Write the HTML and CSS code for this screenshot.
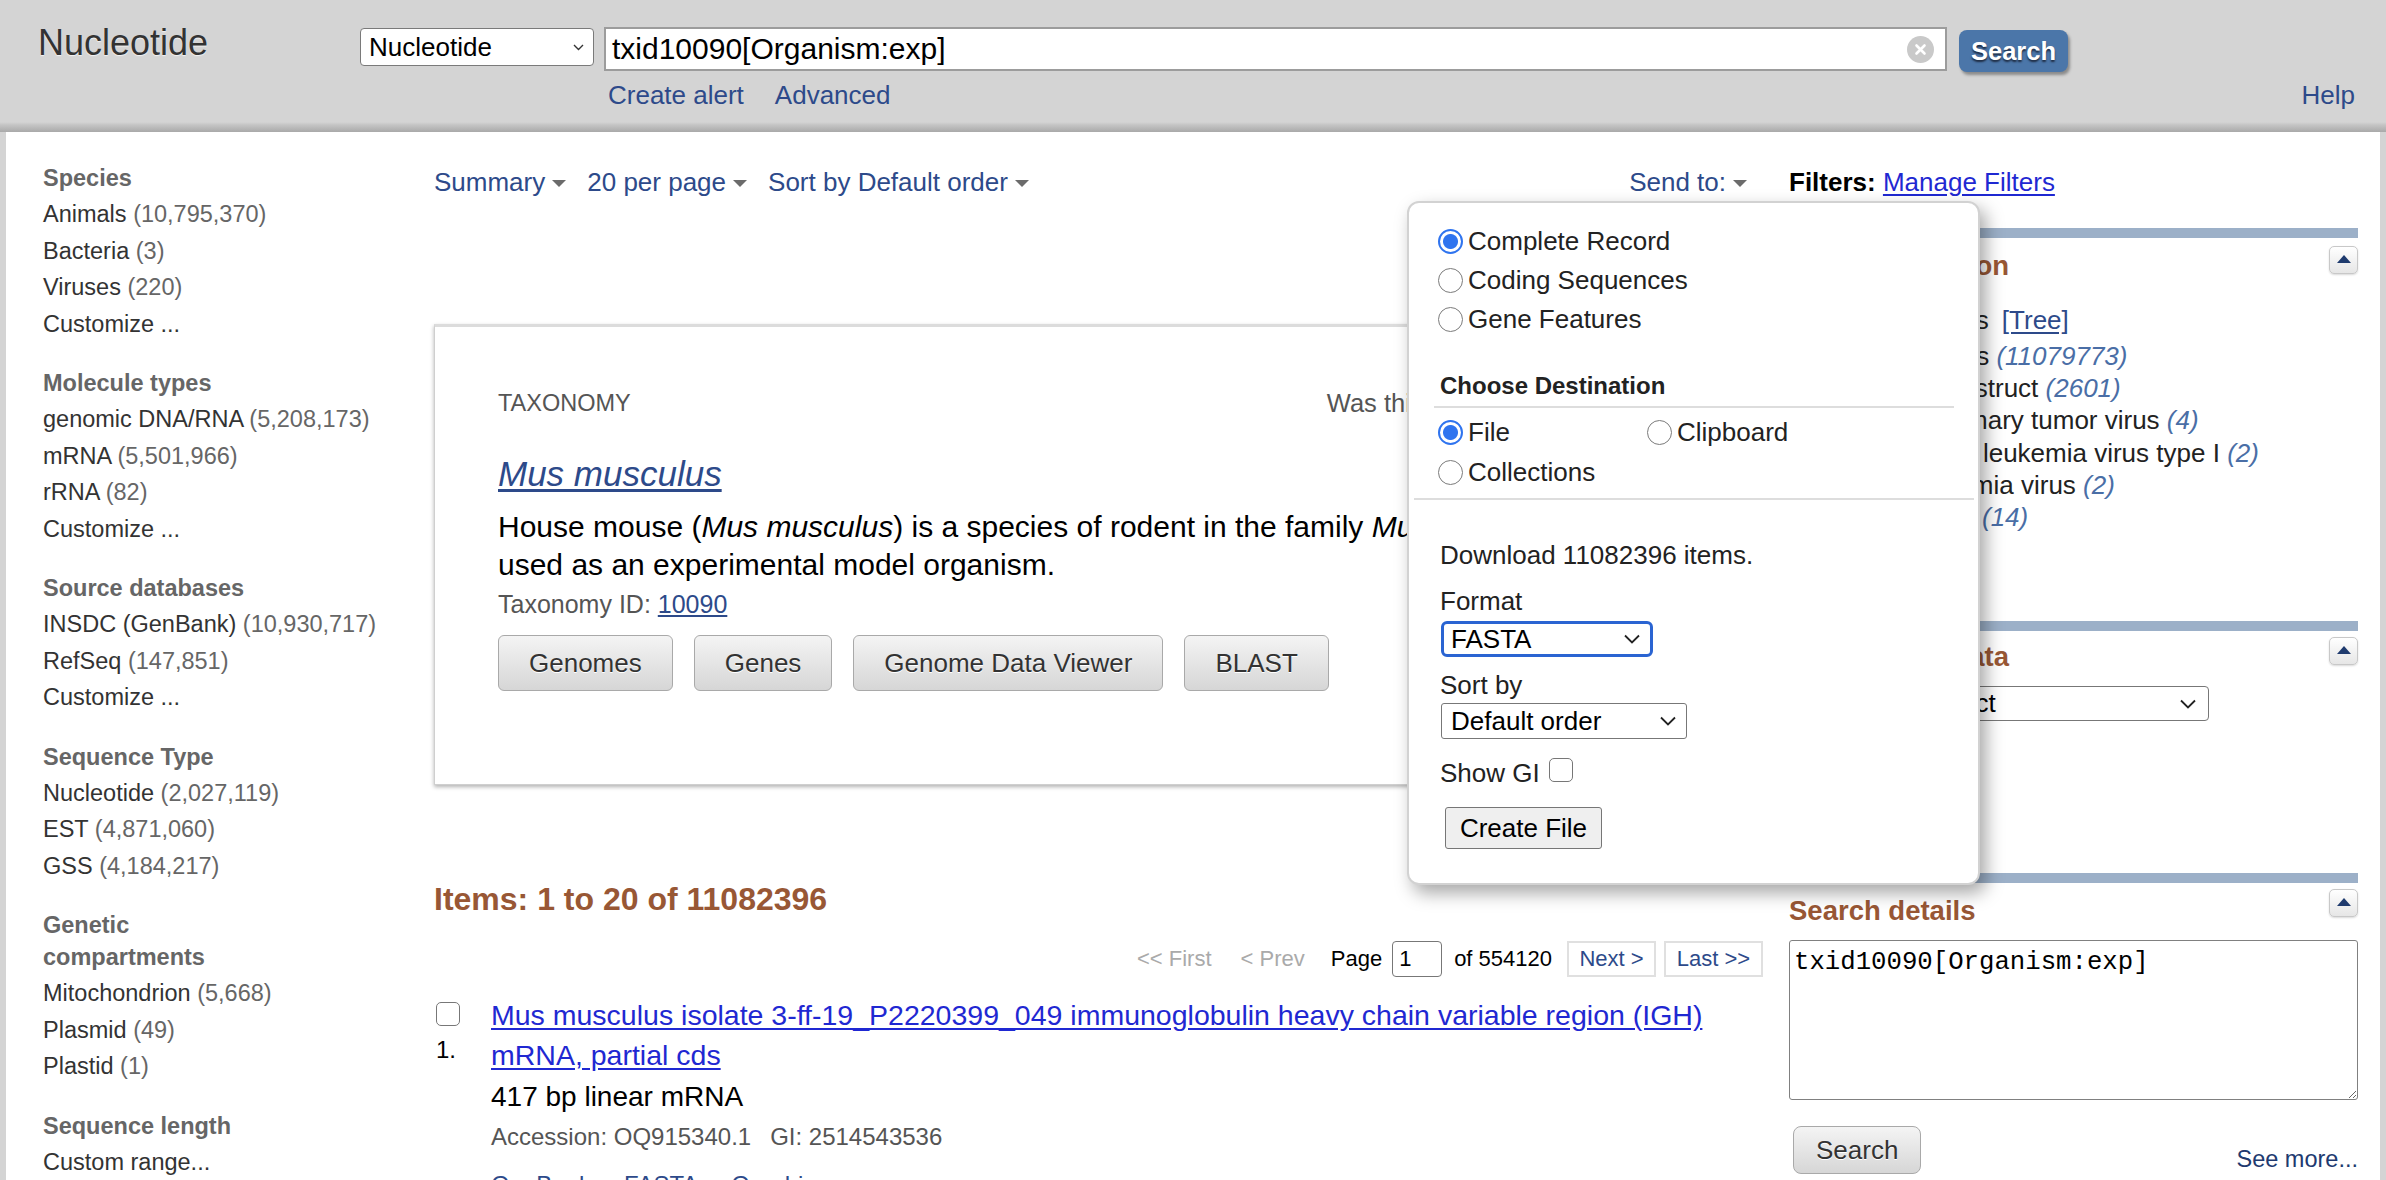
FILE: index.html
```html
<!DOCTYPE html>
<html lang="en">
<head>
<meta charset="utf-8">
<title>Nucleotide</title>
<link rel="stylesheet" href="styles.css">
</head>
<body>
<header class="header">
  <div class="brand">Nucleotide</div>
  <div class="search">
    <div class="search-row">
      <div class="db-select"><span>Nucleotide</span><svg width="11" height="7" viewBox="0 0 11 7"><path d="M1 1l4.5 4.5L10 1" fill="none" stroke="#333" stroke-width="1.4"/></svg></div>
      <div class="term"><span class="term-text">txid10090[Organism:exp]</span><svg width="27" height="27" viewBox="0 0 27 27"><circle cx="13.5" cy="13.5" r="13.5" fill="#c9c9c9"/><path d="M9.5 9.5l8 8M17.5 9.5l-8 8" stroke="#fff" stroke-width="2.6" stroke-linecap="round"/></svg></div>
      <button class="search-btn">Search</button>
    </div>
    <div class="search-links"><a href="#">Create alert</a><a href="#">Advanced</a></div>
  </div>
  <a class="help" href="#">Help</a>
</header>

<div class="page">
  <aside class="facets">
    <div class="facet-group">
      <h3>Species</h3>
      <ul>
        <li>Animals <span class="cnt">(10,795,370)</span></li>
        <li>Bacteria <span class="cnt">(3)</span></li>
        <li>Viruses <span class="cnt">(220)</span></li>
        <li>Customize ...</li>
      </ul>
    </div>
    <div class="facet-group">
      <h3>Molecule types</h3>
      <ul>
        <li>genomic DNA/RNA <span class="cnt">(5,208,173)</span></li>
        <li>mRNA <span class="cnt">(5,501,966)</span></li>
        <li>rRNA <span class="cnt">(82)</span></li>
        <li>Customize ...</li>
      </ul>
    </div>
    <div class="facet-group">
      <h3>Source databases</h3>
      <ul>
        <li>INSDC (GenBank) <span class="cnt">(10,930,717)</span></li>
        <li>RefSeq <span class="cnt">(147,851)</span></li>
        <li>Customize ...</li>
      </ul>
    </div>
    <div class="facet-group">
      <h3>Sequence Type</h3>
      <ul>
        <li>Nucleotide <span class="cnt">(2,027,119)</span></li>
        <li>EST <span class="cnt">(4,871,060)</span></li>
        <li>GSS <span class="cnt">(4,184,217)</span></li>
      </ul>
    </div>
    <div class="facet-group">
      <h3>Genetic compartments</h3>
      <ul>
        <li>Mitochondrion <span class="cnt">(5,668)</span></li>
        <li>Plasmid <span class="cnt">(49)</span></li>
        <li>Plastid <span class="cnt">(1)</span></li>
      </ul>
    </div>
    <div class="facet-group">
      <h3>Sequence length</h3>
      <ul>
        <li>Custom range...</li>
      </ul>
    </div>
  </aside>

  <main class="results">
    <div class="toolbar">
      <a href="#" class="tb-item">Summary<svg class="tri" width="14" height="7" viewBox="0 0 14 7"><path d="M0 0h14L7 7z" fill="#6b6b6b"/></svg></a>
      <a href="#" class="tb-item">20 per page<svg class="tri" width="14" height="7" viewBox="0 0 14 7"><path d="M0 0h14L7 7z" fill="#6b6b6b"/></svg></a>
      <a href="#" class="tb-item">Sort by Default order<svg class="tri" width="14" height="7" viewBox="0 0 14 7"><path d="M0 0h14L7 7z" fill="#6b6b6b"/></svg></a>
      <a href="#" class="tb-item sendto-link">Send to:<svg class="tri" width="14" height="7" viewBox="0 0 14 7"><path d="M0 0h14L7 7z" fill="#6b6b6b"/></svg></a>
    </div>

    <section class="card">
      <div class="card-head">
        <span class="kicker">TAXONOMY</span>
        <span class="helpful">Was this helpful?
          <svg width="36" height="36" viewBox="0 0 24 24"><path d="M2 10h4v11H2zM8 21V10l5-8c1.5 0 2.5 1 2 3l-1 4h6c1.2 0 2 1 1.8 2.2l-1.6 8C20 20.4 19.2 21 18.3 21z" fill="none" stroke="#555" stroke-width="1.4"/></svg>
          <svg width="36" height="36" viewBox="0 0 24 24"><path d="M2 3h4v11H2zM8 3v11l5 8c1.5 0 2.5-1 2-3l-1-4h6c1.2 0 2-1 1.8-2.2l-1.6-8C20 3.6 19.2 3 18.3 3z" fill="none" stroke="#555" stroke-width="1.4"/></svg>
        </span>
      </div>
      <a href="#" class="card-title">Mus musculus</a>
      <p class="card-desc">House mouse (<i>Mus musculus</i>) is a species of rodent in the family <i>Muridae</i>. It is widely used as an experimental model organism.</p>
      <div class="card-id">Taxonomy ID: <a href="#">10090</a></div>
      <div class="card-btns">
        <button class="gbtn">Genomes</button>
        <button class="gbtn">Genes</button>
        <button class="gbtn">Genome Data Viewer</button>
        <button class="gbtn">BLAST</button>
      </div>
    </section>

    <h2 class="items-title">Items: 1 to 20 of 11082396</h2>

    <div class="pager">
      <span class="pg-off pg-first">&lt;&lt; First</span>
      <span class="pg-off pg-prev">&lt; Prev</span>
      <span class="pg-page">Page</span>
      <span class="pg-input">1</span>
      <span class="pg-of">of 554120</span>
      <a href="#" class="pg-box pg-next">Next &gt;</a>
      <a href="#" class="pg-box pg-last">Last &gt;&gt;</a>
    </div>

    <div class="rslt">
      <div class="rslt-num"><span class="cb"></span><span class="num">1.</span></div>
      <div class="rslt-body">
        <a href="#" class="rslt-title">Mus musculus isolate 3-ff-19_P2220399_049 immunoglobulin heavy chain variable region (IGH) mRNA, partial cds</a>
        <div class="rslt-desc">417 bp linear mRNA</div>
        <div class="rslt-meta">Accession: OQ915340.1<span class="gi">GI: 2514543536</span></div>
        <div class="rslt-links"><a href="#">GenBank</a><a href="#">FASTA</a><a href="#">Graphics</a></div>
      </div>
    </div>
  </main>

  <aside class="side">
    <div class="filters"><b>Filters:</b> <a href="#">Manage Filters</a></div>

    <section class="panel panel-taxon">
      <div class="panel-bar"></div>
      <div class="panel-head">
        <h4>Results by taxon</h4>
        <button class="collapse"><svg width="14" height="8" viewBox="0 0 14 8"><path d="M7 0L14 8H0z" fill="#1f3b6e"/></svg></button>
      </div>
      <div class="top-org">Top Organisms<a href="#" class="tree">[Tree]</a></div>
      <ul class="taxa">
        <li>Mus musculus <span class="n">(11079773)</span></li>
        <li>synthetic construct <span class="n">(2601)</span></li>
        <li>Mouse mammary tumor virus <span class="n">(4)</span></li>
        <li>Human T-cell leukemia virus type I <span class="n">(2)</span></li>
        <li>Murine leukemia virus <span class="n">(2)</span></li>
        <li>All other taxa <span class="n">(14)</span></li>
      </ul>
    </section>

    <section class="panel panel-related">
      <div class="panel-bar"></div>
      <div class="panel-head">
        <h4>Find related data</h4>
        <button class="collapse"><svg width="14" height="8" viewBox="0 0 14 8"><path d="M7 0L14 8H0z" fill="#1f3b6e"/></svg></button>
      </div>
      <div class="db-row">Database: <span class="fsel fsel-db">Select<svg width="16" height="10" viewBox="0 0 16 10"><path d="M1 1.5l7 7 7-7" fill="none" stroke="#222" stroke-width="1.8"/></svg></span></div>
      <button class="sbtn find-btn">Find items</button>
    </section>

    <section class="panel panel-details">
      <div class="panel-bar"></div>
      <div class="panel-head">
        <h4>Search details</h4>
        <button class="collapse"><svg width="14" height="8" viewBox="0 0 14 8"><path d="M7 0L14 8H0z" fill="#1f3b6e"/></svg></button>
      </div>
      <textarea class="details" spellcheck="false">txid10090[Organism:exp]</textarea>
      <div class="details-foot">
        <button class="sbtn">Search</button>
        <a href="#" class="see-more">See more...</a>
      </div>
    </section>
  </aside>
</div>

<div class="sendto" role="dialog">
  <div class="st-formats">
    <label class="st-row"><input type="radio" name="fmt" checked>Complete Record</label>
    <label class="st-row"><input type="radio" name="fmt">Coding Sequences</label>
    <label class="st-row"><input type="radio" name="fmt">Gene Features</label>
  </div>
  <div class="st-dest">
    <div class="st-dest-title">Choose Destination</div>
    <div class="st-grid">
      <label class="st-row"><input type="radio" name="dest" checked>File</label>
      <label class="st-row"><input type="radio" name="dest">Clipboard</label>
      <label class="st-row"><input type="radio" name="dest">Collections</label>
    </div>
  </div>
  <div class="st-sep"></div>
  <div class="st-download">
    <div class="st-line">Download 11082396 items.</div>
    <div class="st-line st-format">Format</div>
    <div class="fsel fsel-fasta">FASTA<svg width="16" height="10" viewBox="0 0 16 10"><path d="M1 1.5l7 7 7-7" fill="none" stroke="#222" stroke-width="1.8"/></svg></div>
    <div class="st-line st-sort">Sort by</div>
    <div class="fsel fsel-order">Default order<svg width="16" height="10" viewBox="0 0 16 10"><path d="M1 1.5l7 7 7-7" fill="none" stroke="#222" stroke-width="1.8"/></svg></div>
    <div class="st-line st-gi">Show GI<span class="cb cb-gi"></span></div>
    <button class="create-btn">Create File</button>
  </div>
</div>
</body>
</html>
```

FILE: styles.css
```css
* { box-sizing: border-box; }
html, body { margin: 0; padding: 0; }
body {
  width: 2386px;
  height: 1180px;
  overflow: hidden;
  position: relative;
  background: #d4d4d4;
  font-family: "Liberation Sans", Arial, sans-serif;
  color: #222;
}
a { color: #2d4a8a; text-decoration: none; }
ul { list-style: none; margin: 0; padding: 0; }
button { font-family: "Liberation Sans", Arial, sans-serif; cursor: pointer; }

/* ---------- header ---------- */
.header {
  height: 132px;
  display: flex;
  align-items: flex-start;
  padding: 0 31px 0 38px;
  background: linear-gradient(#d4d4d4 0, #d4d4d4 122px, #c4c4c4 125px, #a9a9a9 132px);
}
.brand {
  width: 322px;
  margin-top: 23px;
  font-size: 36px;
  line-height: 40px;
  color: #333;
  text-shadow: 0 1px 1px #f4f4f4;
}
.search { margin-top: 27px; }
.search-row { display: flex; align-items: flex-start; }
.db-select {
  margin-top: 1px;
  width: 234px;
  height: 38px;
  display: flex;
  align-items: center;
  justify-content: space-between;
  padding: 0 9px 0 8px;
  background: #fff;
  border: 1px solid #7a7a7a;
  border-radius: 4px;
  font-size: 26px;
  color: #000;
}
.term {
  margin-left: 10px;
  width: 1343px;
  height: 44px;
  display: flex;
  align-items: center;
  justify-content: space-between;
  padding: 0 11px 0 6px;
  background: #fff;
  border: 2px solid #9c9c9c;
}
.term-text { font-size: 30px; color: #000; }
.search-btn {
  margin-left: 12px;
  margin-top: 3px;
  width: 109px;
  height: 42px;
  padding: 0;
  border: 0;
  border-radius: 8px;
  background: #4b76a9;
  color: #fff;
  font-weight: bold;
  font-size: 25.5px;
  text-shadow: 0 2px 2px #1d2a40;
  box-shadow: 2px 3px 3px rgba(0, 0, 0, .35);
}
.search-links {
  display: flex;
  gap: 31px;
  padding-left: 248px;
  margin-top: 8px;
  font-size: 26px;
  line-height: 30px;
}
.help {
  margin-left: auto;
  margin-top: 80px;
  font-size: 26px;
  line-height: 30px;
}

/* ---------- page frame ---------- */
.page {
  display: flex;
  margin: 0 6px;
  background: #fff;
  height: 1048px;
}

/* ---------- left facets ---------- */
.facets {
  flex: none;
  width: 428px;
  padding: 30px 0 0 37px;
}
.facet-group { margin-bottom: 25px; }
.facet-group h3 {
  width: 240px;
  margin: 0 0 2px;
  font-size: 23.5px;
  line-height: 32px;
  font-weight: bold;
  color: #666;
}
.facet-group li {
  font-size: 23.5px;
  line-height: 36.5px;
  color: #333;
  white-space: nowrap;
}
.cnt { color: #666; }

/* ---------- main results ---------- */
.results { flex: none; width: 1329px; }
.toolbar {
  display: flex;
  align-items: center;
  gap: 21px;
  height: 36px;
  margin-top: 32px;
  padding-right: 16px;
}
.tb-item {
  display: flex;
  align-items: center;
  font-size: 26px;
  line-height: 36px;
}
.tri { margin-left: 7px; margin-top: 3px; }
.sendto-link { margin-left: auto; }

.card {
  margin-top: 124px;
  border: 1px solid #cfcfcf;
  border-top: 3px solid #dcdcdc;
  box-shadow: 0 2px 4px rgba(0, 0, 0, .3);
  padding: 58px 63px 93px;
  background: #fff;
}
.card-head {
  display: flex;
  align-items: center;
  justify-content: space-between;
  height: 36px;
}
.kicker { font-size: 23.5px; color: #555; }
.helpful {
  display: flex;
  align-items: center;
  gap: 16px;
  margin-right: 75px;
  font-size: 25.5px;
  color: #555;
}
.card-title {
  display: inline-block;
  margin-top: 31px;
  font-size: 35px;
  line-height: 44px;
  font-style: italic;
  text-decoration: underline;
  text-underline-offset: 3px;
}
.card-desc {
  margin: 12px 0 0;
  font-size: 30px;
  line-height: 38px;
  color: #000;
}
.card-id {
  margin-top: 4px;
  font-size: 25px;
  line-height: 32px;
  color: #555;
}
.card-id a { text-decoration: underline; }
.card-btns {
  display: flex;
  gap: 21px;
  margin-top: 15px;
}
.gbtn {
  height: 56px;
  padding: 0 30px;
  border: 1px solid #a9a9a9;
  border-radius: 6px;
  background: linear-gradient(#f4f4f4, #d6d6d6);
  font-size: 26px;
  color: #333;
  text-shadow: 0 1px 0 #fff;
}

.items-title {
  margin: 94px 0 0;
  font-size: 32px;
  line-height: 40px;
  font-weight: bold;
  color: #985735;
}

.pager {
  display: flex;
  align-items: center;
  justify-content: flex-end;
  height: 36px;
  margin-top: 22px;
  font-size: 22px;
  color: #000;
  white-space: nowrap;
}
.pg-off { color: #aaa; }
.pg-first { margin-right: 29px; }
.pg-prev { margin-right: 26px; }
.pg-page { margin-right: 10px; }
.pg-input {
  width: 50px;
  height: 36px;
  padding-left: 6px;
  line-height: 33px;
  border: 1.5px solid #777;
  border-radius: 4px;
  margin-right: 12px;
}
.pg-of { margin-right: 15px; }
.pg-box {
  display: flex;
  align-items: center;
  justify-content: center;
  flex: none;
  height: 36px;
  padding: 0;
  border: 2px solid #e0e0e0;
  white-space: nowrap;
}
.pg-next { margin-right: 8px; width: 89px; }
.pg-last { width: 99px; }

.rslt {
  display: flex;
  margin-top: 18px;
  padding-left: 2px;
}
.rslt-num {
  flex: none;
  width: 55px;
  display: flex;
  flex-direction: column;
  align-items: flex-start;
}
.cb {
  display: block;
  width: 24px;
  height: 24px;
  border: 1.5px solid #777;
  border-radius: 5px;
  background: #fff;
}
.rslt-num .cb { margin-top: 7px; }
.num {
  margin-top: 9px;
  font-size: 24px;
  line-height: 30px;
  color: #000;
}
.rslt-title {
  display: block;
  font-size: 28.5px;
  line-height: 40px;
  color: #1f28d2;
  text-decoration: underline;
  text-underline-offset: 3px;
}
.rslt-desc {
  margin-top: 2px;
  font-size: 28px;
  line-height: 40px;
  color: #000;
}
.rslt-meta {
  font-size: 24px;
  line-height: 40px;
  color: #555;
}
.gi { margin-left: 19px; }
.rslt-links {
  display: flex;
  gap: 33px;
  margin-top: 8px;
  font-size: 24px;
  line-height: 40px;
}

/* ---------- right column ---------- */
.side {
  flex: none;
  width: 569px;
  margin-left: 26px;
}
.filters {
  margin-top: 32px;
  font-size: 26px;
  line-height: 36px;
  color: #000;
}
.filters a { color: #1f28d2; text-decoration: underline; text-underline-offset: 3px; }
.panel-bar { height: 10px; background: #9cb0c8; }
.panel-head {
  display: flex;
  justify-content: space-between;
  align-items: flex-start;
}
.panel-head h4 {
  margin: 11px 0 0;
  font-size: 27.5px;
  line-height: 34px;
  font-weight: bold;
  color: #985735;
}
.collapse {
  display: flex;
  align-items: center;
  justify-content: center;
  width: 29px;
  height: 28px;
  margin-top: 8px;
  padding: 0 0 2px;
  border: 1px solid #c8c8c8;
  border-radius: 5px;
  background: linear-gradient(#ffffff, #e6e6e6);
  box-shadow: 0 1px 2px rgba(0, 0, 0, .15);
}
.panel-taxon { margin-top: 28px; padding-bottom: 88px; }
.top-org {
  margin-top: 21px;
  padding-left: 25px;
  font-size: 26px;
  line-height: 32px;
  color: #222;
}
.tree { margin-left: 13px; text-decoration: underline; text-underline-offset: 3px; }
.taxa { margin-top: 4px; padding-left: 34px; }
.taxa li {
  font-size: 26px;
  line-height: 32.2px;
  color: #222;
  white-space: nowrap;
}
.taxa .n { font-style: italic; color: #4a6ea6; }

.panel-related { padding-bottom: 90px; }
.panel-related .panel-head h4 { margin-top: 9px; }
.panel-related .collapse { margin-top: 6px; }
.db-row {
  display: flex;
  align-items: center;
  gap: 7px;
  margin-top: 12px;
  font-size: 26px;
  color: #222;
}
.fsel {
  display: flex;
  align-items: center;
  justify-content: space-between;
  background: #fff;
  font-size: 26px;
  color: #000;
  border: 1.5px solid #777;
  border-radius: 4px;
}
.fsel-db { width: 294px; height: 35px; padding: 0 12px 0 8px; }
.find-btn { margin-top: 14px; }

.panel-details .collapse { margin-top: 6px; }
.details {
  display: block;
  width: 569px;
  height: 160px;
  margin-top: 12px;
  padding: 7px 4px;
  border: 1.5px solid #808080;
  border-radius: 3px;
  font-family: "Liberation Mono", "Courier New", monospace;
  font-size: 25.7px;
  line-height: 30px;
  color: #000;
  resize: vertical;
}
.details-foot {
  display: flex;
  align-items: flex-end;
  justify-content: space-between;
  margin-top: 26px;
  padding-left: 4px;
}
.sbtn {
  height: 48px;
  padding: 0 22px;
  border: 1px solid #a9a9a9;
  border-radius: 8px;
  background: linear-gradient(#f4f4f4, #d6d6d6);
  font-size: 26px;
  color: #333;
  text-shadow: 0 1px 0 #fff;
}
.see-more {
  font-size: 23.5px;
  line-height: 30px;
  color: #21396f;
}

/* ---------- send to popup ---------- */
.sendto {
  position: absolute;
  left: 1407px;
  top: 201px;
  width: 573px;
  height: 684px;
  padding-top: 19px;
  background: #fff;
  border: 2px solid #d2d2d2;
  border-radius: 12px;
  box-shadow: 6px 8px 18px rgba(0, 0, 0, .35);
  font-size: 26px;
  color: #222;
}
.st-formats { padding-left: 29px; }
.st-row {
  display: flex;
  align-items: center;
  height: 39px;
  white-space: nowrap;
}
.st-row input {
  appearance: none;
  -webkit-appearance: none;
  flex: none;
  width: 25px;
  height: 25px;
  margin: 0 5px 0 0;
  border: 1.5px solid #7b7b7b;
  border-radius: 50%;
  background: #fff;
}
.st-row input:checked {
  border: 2.5px solid #2f74ef;
  background: radial-gradient(circle, #2f74ef 0 7px, #fff 8px);
}
.st-dest { margin: 31px 24px 0 25px; }
.st-dest-title {
  padding: 0 0 4px 6px;
  font-size: 24px;
  line-height: 32px;
  font-weight: bold;
  color: #222;
  border-bottom: 2px solid #ddd;
}
.st-grid {
  display: grid;
  grid-template-columns: 209px auto;
  margin-top: 4px;
  padding-left: 4px;
}
.st-grid .st-row { height: 40px; }
.st-sep { margin: 6px 4px 0 5px; border-top: 2px solid #ddd; }
.st-download { margin-top: 37px; padding-left: 31px; }
.st-line { line-height: 36px; }
.st-format { margin-top: 10px; }
.fsel-fasta {
  width: 212px;
  height: 36px;
  margin: 2px 0 0 1px;
  padding: 0 10px 0 7px;
  border: 3px solid #2a64d2;
  border-radius: 6px;
}
.st-sort { margin-top: 10px; }
.fsel-order {
  width: 246px;
  height: 36px;
  margin-left: 1px;
  padding: 0 10px 0 9px;
  border-radius: 3px;
}
.st-gi { display: flex; align-items: center; margin-top: 16px; height: 36px; }
.cb-gi { margin-left: 9px; margin-top: -6px; }
.create-btn {
  margin: 16px 0 0 5px;
  width: 157px;
  height: 42px;
  padding: 0;
  border: 1.5px solid #767676;
  border-radius: 3px;
  background: #efefef;
  font-size: 26px;
  color: #000;
}
```
